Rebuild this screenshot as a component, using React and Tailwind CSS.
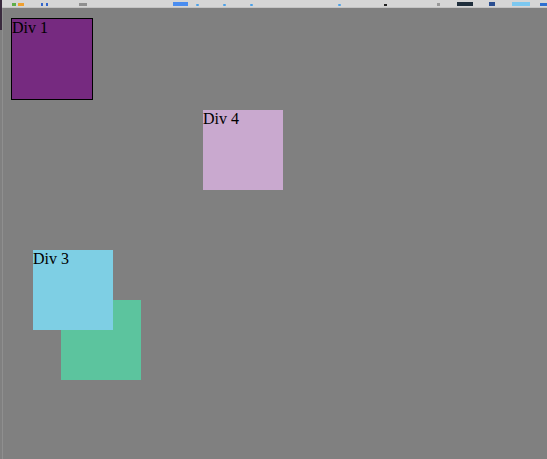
// bottom edges of the browser bookmark icons peeking above the overlay
const marks = [
  { gap: 'ml-[12px]', cls: 'w-[4px] h-[3px] bg-[#5fae4a]' },
  { gap: 'ml-[2px]', cls: 'w-[6px] h-[3px] bg-[#f0a030]' },
  { gap: 'ml-[17px]', cls: 'w-[2px] h-[3px] bg-[#3366cc]' },
  { gap: 'ml-[3px]', cls: 'w-[2px] h-[3px] bg-[#3366cc]' },
  { gap: 'ml-[31px]', cls: 'w-[8px] h-[3px] bg-[#909090]' },
  { gap: 'ml-[86px]', cls: 'w-[15px] h-[4px] bg-[#4a8df0]' },
  { gap: 'ml-[8px]', cls: 'w-[3px] h-[2px] rounded-full bg-[#4aa0e8]' },
  { gap: 'ml-[24px]', cls: 'w-[3px] h-[2px] rounded-full bg-[#4aa0e8]' },
  { gap: 'ml-[24px]', cls: 'w-[3px] h-[2px] rounded-full bg-[#4aa0e8]' },
  { gap: 'ml-[85px]', cls: 'w-[3px] h-[2px] rounded-full bg-[#4aa0e8]' },
  { gap: 'ml-[43px]', cls: 'w-[3px] h-[2px] bg-[#222]' },
  { gap: 'ml-[50px]', cls: 'w-[3px] h-[3px] bg-[#999]' },
  { gap: 'ml-[17px]', cls: 'w-[16px] h-[4px] bg-[#1f2e3c]' },
  { gap: 'ml-[16px]', cls: 'w-[6px] h-[4px] bg-[#2a4e90]' },
  { gap: 'ml-[17px]', cls: 'w-[18px] h-[4px] bg-[#7cc8f0]' },
  { gap: 'ml-[10px]', cls: 'w-[7px] h-[3px] bg-[#2f6fd0]' },
];

export default function App() {
  return (
    <div className="relative w-full h-[459px] overflow-hidden bg-[#808080] font-['Liberation_Serif',serif] text-black">
      <div className="flex items-end h-[8px] pb-px bg-[#d6d6d6] border-b border-[#c4c4c4]">
        {marks.map((m, i) => (
          <div key={i} className={`${m.gap} ${m.cls} shrink-0`} />
        ))}
      </div>

      {/* edge of the page behind */}
      <div className="absolute left-0 top-0 w-[2px] h-[30px] bg-[#3a2a3e]" />
      <div className="absolute left-[2px] top-[8px] bottom-0 w-px bg-[#8f8f8f]" />

      {/* positioned boxes (the demo itself) */}
      <div className="absolute left-[61px] top-[300px] w-[80px] h-[80px] bg-[#5cc49e] text-base leading-[18px]">Div 2</div>
      <div className="absolute left-[33px] top-[250px] w-[80px] h-[80px] bg-[#7ecfe4] text-base leading-[18px]">Div 3</div>
      <div className="absolute left-[203px] top-[110px] w-[80px] h-[80px] bg-[#c9a9cf] text-base leading-[18px]">Div 4</div>
      <div className="absolute left-[11px] top-[18px] w-[82px] h-[82px] border border-black bg-[#762a80] text-base leading-[18px]">Div 1</div>
    </div>
  );
}
